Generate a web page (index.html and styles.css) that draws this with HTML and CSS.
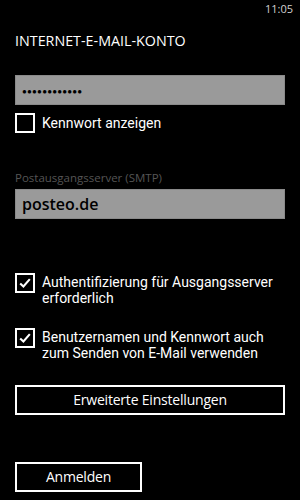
FILE: index.html
```html
<!DOCTYPE html>
<html lang="de">
<head>
<meta charset="utf-8">
<link rel="stylesheet" href="styles.css">
</head>
<body>
<div class="screen">
  <div class="status"><span class="time">11:05</span></div>
  <h1 class="title">INTERNET-E-MAIL-KONTO</h1>
  <div class="field pw"><span class="dots">●●●●●●●●●●●●</span></div>
  <div class="check-row show-pw">
    <span class="box"></span>
    <span class="check-label">Kennwort anzeigen</span>
  </div>
  <div class="label">Postausgangsserver (SMTP)</div>
  <div class="field smtp"><span class="value">posteo.de</span></div>
  <div class="check-row auth">
    <span class="box"><svg viewBox="0 0 16 16" class="tick"><path d="M2.5 8.5 L6.2 12 L13.5 3.5" /></svg></span>
    <span class="check-label"><span class="line">Authentifizierung für Ausgangsserver</span><span class="line">erforderlich</span></span>
  </div>
  <div class="check-row same">
    <span class="box"><svg viewBox="0 0 16 16" class="tick"><path d="M2.5 8.5 L6.2 12 L13.5 3.5" /></svg></span>
    <span class="check-label"><span class="line">Benutzernamen und Kennwort auch</span><span class="line">zum Senden von E-Mail verwenden</span></span>
  </div>
  <div class="button wide">Erweiterte Einstellungen</div>
  <div class="button login">Anmelden</div>
</div>
</body>
</html>
```

FILE: styles.css
```css
html, body {
  margin: 0;
  padding: 0;
  background: #000;
}
.screen {
  width: 300px;
  height: 500px;
  box-sizing: border-box;
  padding: 0 15px;
  display: flex;
  flex-direction: column;
  font-family: "Open Sans", "Noto Sans", sans-serif;
  color: #fff;
  overflow: hidden;
}
.status {
  height: 18px;
  display: flex;
  justify-content: flex-end;
  align-items: center;
  margin-right: -8px;
}
.time {
  font-size: 11px;
  color: #d0d0d0;
  line-height: 18px;
}
.title {
  margin: 13px 0 0;
  font-size: 14.3px;
  font-weight: 400;
  line-height: 20px;
}
.field {
  height: 30px;
  box-sizing: border-box;
  background: #9a9a9a;
  border: 1px solid #8a8a8a;
  display: flex;
  align-items: center;
  padding-left: 6px;
}
.pw {
  margin-top: 24px;
}
.dots {
  font-size: 8px;
  letter-spacing: 0.2px;
  color: #000;
}
.check-row {
  display: flex;
  align-items: flex-start;
  gap: 7px;
}
.box {
  width: 20px;
  height: 20px;
  box-sizing: border-box;
  border: 2px solid #fff;
  flex: none;
  display: flex;
  align-items: center;
  justify-content: center;
}
.tick {
  width: 14px;
  height: 14px;
  fill: none;
  stroke: #fff;
  stroke-width: 2.4;
}
.check-label {
  font-family: "Roboto", "Open Sans", sans-serif;
  font-size: 14px;
  letter-spacing: 0;
  line-height: 16px;
  color: #fff;
  white-space: nowrap;
  display: flex;
  flex-direction: column;
}
.line {
  display: block;
  font-size: 14px;
  height: 16.4px;
  line-height: 16.4px;
}
.show-pw {
  margin-top: 8px;
}
.show-pw .check-label {
  padding-top: 2px;
}
.label {
  margin-top: 38px;
  font-size: 11.5px;
  line-height: 14px;
  color: #555;
}
.smtp {
  margin-top: 4px;
}
.value {
  font-size: 16px;
  font-weight: 600;
  color: #000;
}
.auth {
  margin-top: 54px;
}
.auth .check-label, .same .check-label {
  padding-top: 1px;
}
.same {
  margin-top: 21px;
}
.button {
  height: 30px;
  box-sizing: border-box;
  border: 2px solid #fff;
  display: flex;
  align-items: center;
  justify-content: center;
  font-size: 14px;
  letter-spacing: -0.2px;
}
.wide {
  margin-top: 23px;
}
.login {
  margin-top: 47px;
  width: 127px;
}
```
